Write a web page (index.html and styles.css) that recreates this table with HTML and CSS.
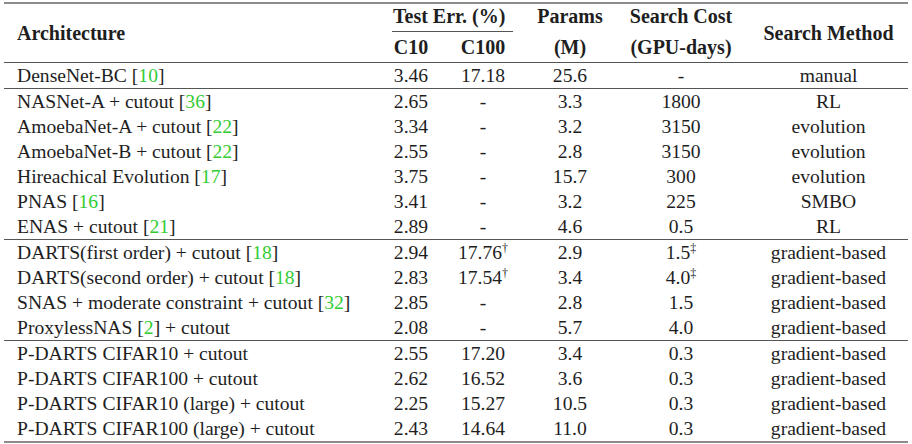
FILE: index.html
```html
<!DOCTYPE html>
<html lang="en">
<head>
<meta charset="utf-8">
<title>Results</title>
<link rel="stylesheet" href="styles.css">
</head>
<body>
<table class="results">
  <colgroup>
    <col class="c-arch"><col class="c-c10"><col class="c-c100"><col class="c-params"><col class="c-cost"><col class="c-method">
  </colgroup>
  <thead>
    <tr class="h1">
      <th rowspan="2" class="arch">Architecture</th>
      <th colspan="2" class="group"><div class="cmid">Test Err. (%)</div></th>
      <th>Params</th>
      <th>Search Cost</th>
      <th rowspan="2">Search Method</th>
    </tr>
    <tr class="h2">
      <th>C10</th>
      <th>C100</th>
      <th>(M)</th>
      <th>(GPU-days)</th>
    </tr>
  </thead>
  <tbody>
    <tr class="sep"><td class="arch">DenseNet-BC [<span class="cite">10</span>]</td><td>3.46</td><td>17.18</td><td>25.6</td><td>-</td><td>manual</td></tr>
    <tr class="sep"><td class="arch">NASNet-A + cutout [<span class="cite">36</span>]</td><td>2.65</td><td>-</td><td>3.3</td><td>1800</td><td>RL</td></tr>
    <tr><td class="arch">AmoebaNet-A + cutout [<span class="cite">22</span>]</td><td>3.34</td><td>-</td><td>3.2</td><td>3150</td><td>evolution</td></tr>
    <tr><td class="arch">AmoebaNet-B + cutout [<span class="cite">22</span>]</td><td>2.55</td><td>-</td><td>2.8</td><td>3150</td><td>evolution</td></tr>
    <tr><td class="arch">Hireachical Evolution [<span class="cite">17</span>]</td><td>3.75</td><td>-</td><td>15.7</td><td>300</td><td>evolution</td></tr>
    <tr><td class="arch">PNAS [<span class="cite">16</span>]</td><td>3.41</td><td>-</td><td>3.2</td><td>225</td><td>SMBO</td></tr>
    <tr><td class="arch">ENAS + cutout [<span class="cite">21</span>]</td><td>2.89</td><td>-</td><td>4.6</td><td>0.5</td><td>RL</td></tr>
    <tr class="sep"><td class="arch">DARTS(first order) + cutout [<span class="cite">18</span>]</td><td>2.94</td><td>17.76<sup>†</sup></td><td>2.9</td><td>1.5<sup>‡</sup></td><td>gradient-based</td></tr>
    <tr><td class="arch">DARTS(second order) + cutout [<span class="cite">18</span>]</td><td>2.83</td><td>17.54<sup>†</sup></td><td>3.4</td><td>4.0<sup>‡</sup></td><td>gradient-based</td></tr>
    <tr><td class="arch">SNAS + moderate constraint + cutout [<span class="cite">32</span>]</td><td>2.85</td><td>-</td><td>2.8</td><td>1.5</td><td>gradient-based</td></tr>
    <tr><td class="arch">ProxylessNAS [<span class="cite">2</span>] + cutout</td><td>2.08</td><td>-</td><td>5.7</td><td>4.0</td><td>gradient-based</td></tr>
    <tr class="sep"><td class="arch">P-DARTS CIFAR10 + cutout</td><td>2.55</td><td>17.20</td><td>3.4</td><td>0.3</td><td>gradient-based</td></tr>
    <tr><td class="arch">P-DARTS CIFAR100 + cutout</td><td>2.62</td><td>16.52</td><td>3.6</td><td>0.3</td><td>gradient-based</td></tr>
    <tr><td class="arch">P-DARTS CIFAR10 (large) + cutout</td><td>2.25</td><td>15.27</td><td>10.5</td><td>0.3</td><td>gradient-based</td></tr>
    <tr><td class="arch">P-DARTS CIFAR100 (large) + cutout</td><td>2.43</td><td>14.64</td><td>11.0</td><td>0.3</td><td>gradient-based</td></tr>
  </tbody>
</table>
</body>
</html>
```

FILE: styles.css
```css
html {
  font-family: "Liberation Serif", "Times New Roman", serif;
}

body {
  margin: 0;
  font-family: "Liberation Serif", "Times New Roman", serif;
  color: #1e1e1e;
}

.results {
  margin: 2px 0 0 4px;
  width: 904px;
  table-layout: fixed;
  border-collapse: collapse;
  border-top: 2px solid #8c8c8c;
  border-bottom: 2px solid #8c8c8c;
}

.c-arch { width: 379px; }
.c-c10 { width: 56px; }
.c-c100 { width: 88px; }
.c-params { width: 86px; }
.c-cost { width: 136px; }
.c-method { width: 159px; }

.results th {
  font-family: "Liberation Serif", "Times New Roman", serif;
  font-weight: bold;
  font-size: 20px;
  padding: 0;
  text-align: center;
  vertical-align: middle;
  white-space: nowrap;
}

.results .h1 th {
  height: 28px;
  line-height: 24px;
  vertical-align: top;
}

.results .h1 th[rowspan] {
  vertical-align: middle;
  border-bottom: 1px solid #555;
}

.results .h2 th {
  height: 30px;
  line-height: 30px;
  border-bottom: 1px solid #555;
}

.results th.group {
  text-align: left;
}

.cmid {
  margin: 0 14px 0 9px;
  height: 28px;
  box-sizing: border-box;
  border-bottom: 1px solid #555;
  padding-left: 1px;
}

.results td {
  font-family: "Liberation Serif", "Times New Roman", serif;
  font-size: 19.6px;
  height: 25px;
  line-height: 25px;
  padding: 0;
  text-align: center;
  white-space: nowrap;
}

.results .arch {
  text-align: left;
  padding-left: 13px;
}

.results tr.sep td {
  border-top: 1px solid #555;
}

.cite {
  color: #33cc33;
}

.results sup {
  font-size: 12px;
  line-height: 0;
  vertical-align: 7px;
}
```
